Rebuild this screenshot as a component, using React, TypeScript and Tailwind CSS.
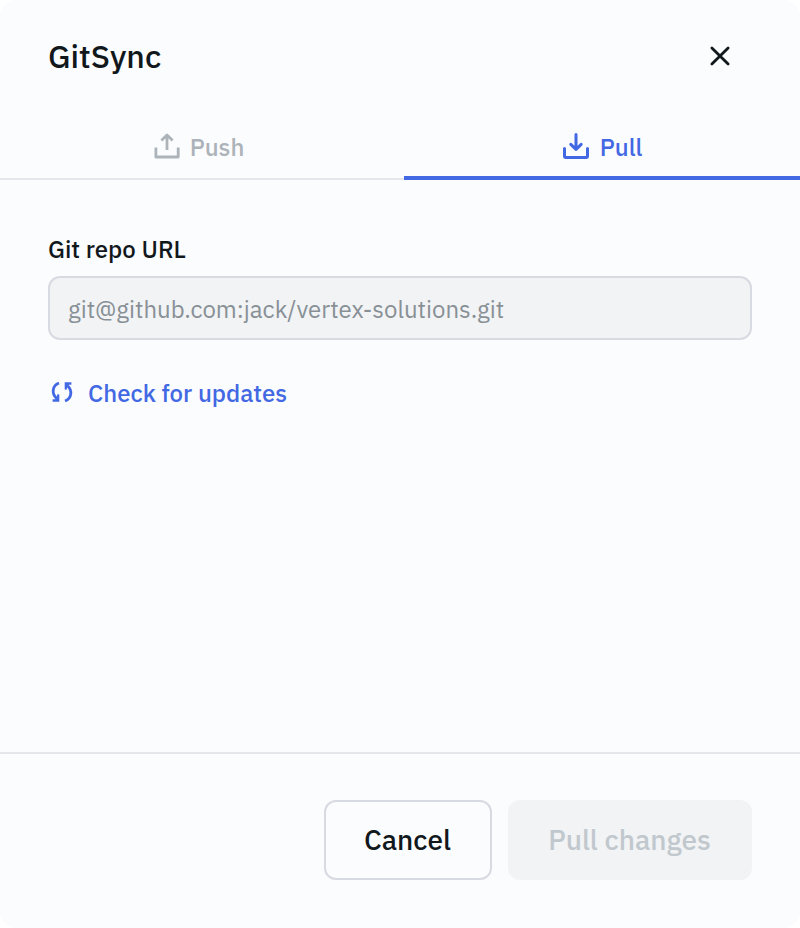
import React from "react";

function PushIcon() {
  return (
    <svg className="h-8 w-8" viewBox="0 0 32 32" fill="none" stroke="currentColor" strokeWidth="2.8" strokeLinejoin="round">
      <path d="M4.9 16.4V26H27.2V16.4" />
      <path d="M16 19V4.4M10.4 9.6L16 4L21.6 9.6" />
    </svg>
  );
}

function PullIcon() {
  return (
    <svg className="h-8 w-8" viewBox="0 0 32 32" fill="none" stroke="currentColor" strokeWidth="3" strokeLinecap="round" strokeLinejoin="round">
      <path d="M4.5 18.5V26.6Q4.5 27.4 5.3 27.4H26.7Q27.5 27.4 27.5 26.6V18.5" />
      <path d="M16 4.6V19.3M10.8 14.4L16 19.4L21.2 14.4" />
    </svg>
  );
}

function SyncIcon() {
  return (
    <svg className="h-6 w-6" viewBox="0 0 24 24" fill="none" stroke="currentColor" strokeWidth="2.8">
      <path d="M9 3C2.2 5.6 1.4 13.4 6.4 18.2" />
      <path d="M15 21C21.8 18.4 22.6 10.6 17.6 5.8" />
      <path d="M2.6 21.8H9.3V14.4L7.4 14.2L6.6 17L5.2 19.2H2.6Z" fill="currentColor" stroke="none" />
      <path d="M21.4 2.2H14.7V9.6L16.6 9.8L17.4 7L18.8 4.8H21.4Z" fill="currentColor" stroke="none" />
    </svg>
  );
}

export default function App() {
  return (
    <div className="h-[928px] w-[800px] bg-white font-['IBM_Plex_Sans',Roboto,sans-serif] font-medium text-[#11181c]">
      <div className="flex h-full flex-col overflow-hidden rounded-2xl bg-[#fbfcfe]">
        <header className="flex h-28 items-center justify-between pr-16 pl-12">
          <h1 className="text-[32px] leading-10">GitSync</h1>
          <button aria-label="Close" className="flex h-8 w-8 items-center justify-center">
            <svg className="h-8 w-8" viewBox="0 0 32 32" fill="none" stroke="currentColor" strokeWidth="2.8" strokeLinecap="round">
              <path d="M7.9 7.9L24.1 24.1M24.1 7.9L7.9 24.1" />
            </svg>
          </button>
        </header>
        <nav className="flex h-[68px] text-2xl">
          <button className="flex w-[404px] items-center justify-center gap-[7px] border-b-2 border-[#e4e6eb] pt-1 pr-[9px] text-[#acb3b9]">
            <PushIcon />
            <span>Push</span>
          </button>
          <button className="flex flex-1 items-center justify-center gap-2 border-b-4 border-[#4368e3] pt-1 pr-[2px] text-[#4368e3]">
            <PullIcon />
            <span className="pt-[2px]">Pull</span>
          </button>
        </nav>
        <main className="flex flex-1 flex-col items-start px-12 pt-[53px]">
          <label className="text-2xl leading-8" htmlFor="repo">Git repo URL</label>
          <input
            id="repo"
            disabled
            value="git@github.com:jack/vertex-solutions.git"
            className="mt-[11px] h-16 w-full rounded-xl border-2 border-[#d7dae0] bg-[#f1f3f5] px-[18px] pt-0.5 text-2xl font-normal text-[#889096]"
          />
          <button className="mt-[35px] flex items-center gap-3.5 pl-0.5 text-2xl leading-9 text-[#4368e3]">
            <span className="pb-[2px]"><SyncIcon /></span>
            <span>Check for updates</span>
          </button>
        </main>
        <footer className="flex h-44 justify-end gap-4 border-t-2 border-[#e4e6ea] px-12 pt-[46px] text-[28px]">
          <button className="h-20 w-[168px] rounded-xl border-2 border-[#d7dae0] pr-px">Cancel</button>
          <button disabled className="h-20 w-[244px] rounded-xl bg-[#f1f3f5] pr-px text-[#c1c8cd]">Pull changes</button>
        </footer>
      </div>
    </div>
  );
}
